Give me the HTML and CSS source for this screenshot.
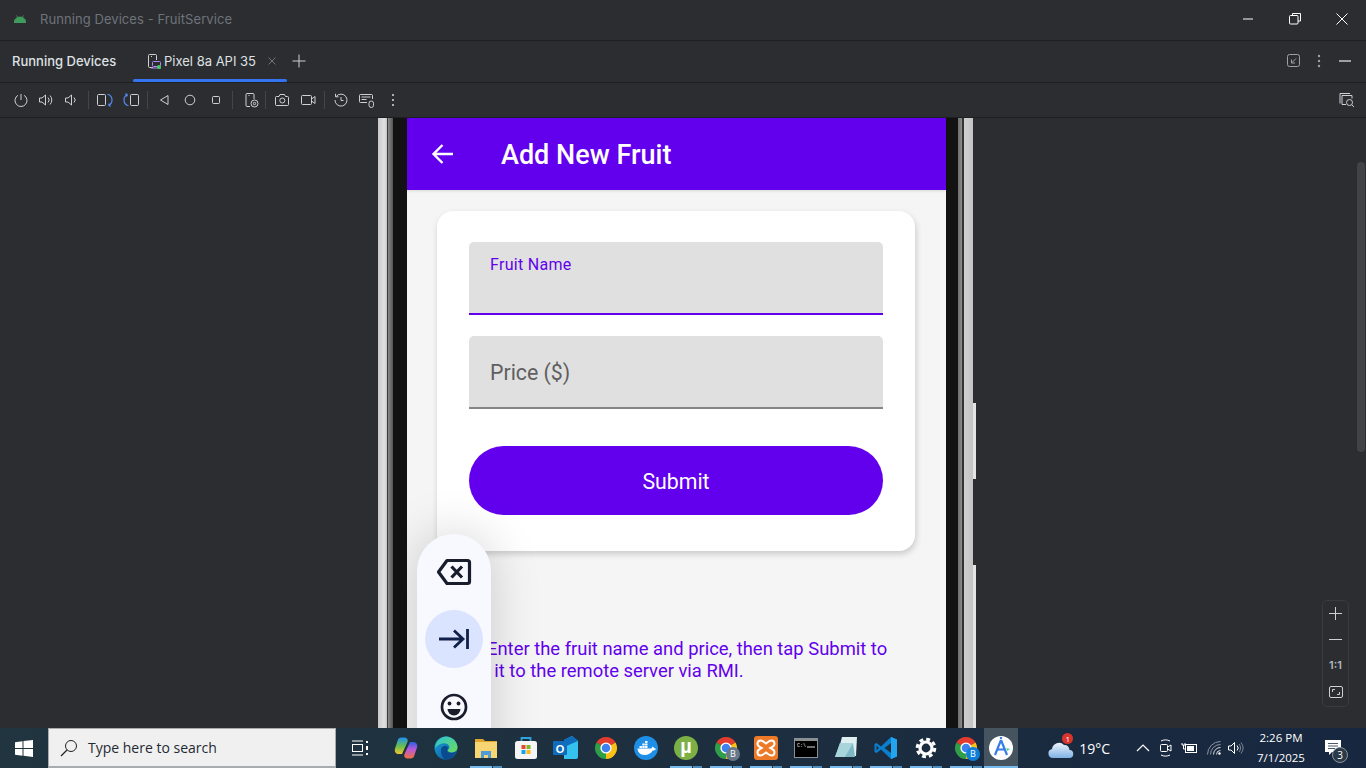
FILE: index.html
```html
<!DOCTYPE html>
<html lang="en">
<head>
<meta charset="utf-8">
<title>Running Devices - FruitService</title>
<link rel="stylesheet" href="styles.css">
</head>
<body>
<svg class="defs" width="0" height="0" aria-hidden="true">
  <defs>
    <symbol id="chrome" viewBox="0 0 24 24">
      <path d="M12 12 2.47 6.5A11 11 0 0 1 21.53 6.5Z" fill="#e33b2e"/>
      <path d="M12 12 21.53 6.5A11 11 0 0 1 12 23Z" fill="#fbc116"/>
      <path d="M12 12 12 23A11 11 0 0 1 2.47 6.5Z" fill="#2f9e48"/>
      <circle cx="12" cy="12" r="5.6" fill="#fff"/>
      <circle cx="12" cy="12" r="4.3" fill="#3f82ef"/>
    </symbol>
    <linearGradient id="edgeg" x1="0" y1="0" x2="1" y2="1">
      <stop offset="0" stop-color="#1aa3dc"/><stop offset="1" stop-color="#0a4f96"/>
    </linearGradient>
    <linearGradient id="edgeh" x1="0" y1="0" x2="1" y2="1">
      <stop offset="0" stop-color="#2cc3d5"/><stop offset="1" stop-color="#6fdc5a"/>
    </linearGradient>
    <linearGradient id="copa" x1="0" y1="0" x2="0" y2="1">
      <stop offset="0" stop-color="#1f8ff0"/><stop offset=".55" stop-color="#6cc04a"/><stop offset="1" stop-color="#f4c430"/>
    </linearGradient>
    <linearGradient id="copb" x1="0" y1="0" x2="0" y2="1">
      <stop offset="0" stop-color="#2a5fe0"/><stop offset=".45" stop-color="#b85ad8"/><stop offset="1" stop-color="#f2703c"/>
    </linearGradient>
    <linearGradient id="cloud" x1="0" y1="0" x2="0" y2="1">
      <stop offset="0" stop-color="#eef4fb"/><stop offset="1" stop-color="#7fb2e6"/>
    </linearGradient>
  </defs>
</svg>
<div class="app">
  <header class="titlebar">
    <svg class="android" width="12" height="8" viewBox="0 0 12 8"><path d="M0 8C0 4.500 2.500 2 6 2s6 2.500 6 6Z M2.500 0.500 4 3 M9.500 0.500 8 3" fill="#3f9c5c" stroke="#3f9c5c" stroke-width=".8"/></svg>
    <span class="title-text">Running Devices - FruitService</span>
    <div class="spacer"></div>
    <div class="win-ctrls">
      <svg width="12" height="12" viewBox="0 0 12 12"><path d="M1 6h10" stroke="#fff"/></svg>
      <svg width="12" height="12" viewBox="0 0 12 12" fill="none" stroke="#fff"><path d="M3.500 2.500V.5h8v7.500H9"/><rect x=".5" y="2.500" width="8.500" height="8.500" rx="1"/></svg>
      <svg width="12" height="12" viewBox="0 0 12 12"><path d="M.5.5l11 11M11.500.5l-11 11" stroke="#fff"/></svg>
    </div>
  </header>
  <nav class="tabsbar">
    <span class="tabs-label">Running Devices</span>
    <div class="tab">
      <svg width="16" height="16" viewBox="0 0 16 16" fill="none" stroke="#ced0d6"><path d="M7 14.500H3.500a1 1 0 0 1-1-1V2.500a1 1 0 0 1 1-1h6a1 1 0 0 1 1 1V7"/><path d="M5 3.500h1"/><rect x="6.500" y="8.500" width="8" height="5" rx="1" stroke="#b189f5"/><path d="M5 15h10" stroke="#b189f5"/><circle cx="13" cy="14" r="2" fill="#3fd15f" stroke="none"/></svg>
      <span>Pixel 8a API 35</span>
      <svg class="tab-x" width="8" height="8" viewBox="0 0 8 8"><path d="M.5.5l7 7M7.500.5l-7 7" stroke="#6f737a"/></svg>
    </div>
    <svg class="tab-plus" width="14" height="14" viewBox="0 0 14 14"><path d="M7 .5v13M.5 7h13" stroke="#ced0d6"/></svg>
    <div class="spacer"></div>
    <div class="tabs-right">
      <svg width="14" height="14" viewBox="0 0 14 14" fill="none" stroke="#9da0a8"><rect x=".5" y=".5" width="12" height="12" rx="2"/><path d="M9 4.500 4.500 9M4.500 5.500V9H8"/></svg>
      <svg width="4" height="14" viewBox="0 0 4 14" fill="#9da0a8"><circle cx="2" cy="2" r="1.200"/><circle cx="2" cy="7" r="1.200"/><circle cx="2" cy="12" r="1.200"/></svg>
      <svg width="14" height="14" viewBox="0 0 14 14"><path d="M1 7h12" stroke="#9da0a8" stroke-width="2"/></svg>
    </div>
  </nav>
  <div class="toolbar">
    <span class="tool w25"><svg viewBox="0 0 16 16"><path d="M8 2v6"/><path d="M5 3.300a6 6 0 1 0 6 0"/></svg></span>
    <span class="tool w25"><svg viewBox="0 0 16 16"><path d="M1.500 6v4h2.500l3.500 3V3L4 6Z"/><path d="M10 5.500a3.500 3.500 0 0 1 0 5M12 3.500a6.500 6.500 0 0 1 0 9"/></svg></span>
    <span class="tool w25"><svg viewBox="0 0 16 16"><path d="M2.500 6v4H5l3.500 3V3L5 6Z"/><path d="M11 5.500a3.500 3.500 0 0 1 0 5"/></svg></span>
    <i class="sep s1"></i>
    <span class="tool"><svg viewBox="0 0 16 16"><rect x=".5" y="2.500" width="8" height="11" rx="1"/><path class="blue" d="M10.500 2.500h1c2.200 1 3.500 3 3.500 5.500s-1.300 4.500-3.500 5.500M11.500 13.500l2.200.6M11.500 13.500l1-2"/></svg></span>
    <span class="tool"><svg viewBox="0 0 16 16"><rect x="7.500" y="2.500" width="8" height="11" rx="1"/><path class="blue" d="M5.500 13.500h-1C2.300 12.500 1 10.500 1 8s1.300-4.500 3.500-5.500M4.500 2.500l-2.200-.6M4.500 2.500l-1 2"/></svg></span>
    <i class="sep s2"></i>
    <span class="tool"><svg viewBox="0 0 16 16"><path d="M12 3.500v9L4.500 8Z"/></svg></span>
    <span class="tool"><svg viewBox="0 0 16 16"><circle cx="8" cy="8" r="4.800"/></svg></span>
    <span class="tool"><svg viewBox="0 0 16 16"><rect x="4.500" y="4.500" width="7" height="7" rx="1"/></svg></span>
    <i class="sep s3"></i>
    <span class="tool w24"><svg viewBox="0 0 16 16"><path d="M7 14.500H4a1 1 0 0 1-1-1v-11a1 1 0 0 1 1-1h6a1 1 0 0 1 1 1V7"/><path d="M5.500 3.500h1"/><circle cx="11.500" cy="11.500" r="3.500"/><circle cx="11.500" cy="11.500" r="1.200"/></svg></span>
    <i class="sep s4"></i>
    <span class="tool"><svg viewBox="0 0 16 16"><path d="M1.500 5.500a1 1 0 0 1 1-1H5l1-2h4.500l1 2h2a1 1 0 0 1 1 1v7a1 1 0 0 1-1 1h-11a1 1 0 0 1-1-1Z"/><circle cx="8.300" cy="8.500" r="2.500"/></svg></span>
    <span class="tool"><svg viewBox="0 0 16 16"><rect x="1.500" y="3.500" width="10" height="9" rx="1"/><path d="M11.500 7l3.500-2.500v7L11.500 9"/></svg></span>
    <i class="sep s5"></i>
    <span class="tool"><svg viewBox="0 0 16 16"><path d="M3.200 4.500A6 6 0 1 1 2 8"/><path d="M2.500 1.800v3h3"/><path d="M8 5v3.500h2.500"/></svg></span>
    <span class="tool"><svg viewBox="0 0 16 16"><path d="M8 10.500H1.500a1 1 0 0 1-1-1v-6a1 1 0 0 1 1-1h11a1 1 0 0 1 1 1V7"/><path d="M2.500 5h9M2.500 7.500h5"/><rect x="10" y="9" width="4.500" height="6.500" rx="2.200"/></svg></span>
    <span class="tool"><svg viewBox="0 0 16 16"><circle class="dot" cx="8" cy="3" r="1.100"/><circle class="dot" cx="8" cy="8" r="1.100"/><circle class="dot" cx="8" cy="13" r="1.100"/></svg></span>
    <div class="spacer"></div>
    <span class="tool last"><svg viewBox="0 0 16 16"><path d="M1 11.500V1.500h10"/><path d="M7 12.500H3V3.500h10v3"/><circle cx="10.500" cy="10.500" r="3"/><path d="M13 13l2 2"/></svg></span>
  </div>
  <main class="stage">
    <div class="phone">
      <span class="hw-btn hw-power"></span>
      <span class="hw-btn hw-vol"></span>
      <div class="screen">
        <div class="appbar">
          <svg class="back" width="24" height="24" viewBox="0 0 24 24"><path d="M22 12H2.500M11.500 3l-9 9 9 9" fill="none" stroke="#fff" stroke-width="2.400"/></svg>
          <h1 class="appbar-title">Add New Fruit</h1>
        </div>
        <div class="content">
          <form class="card">
            <div class="field field-focus"><span class="label-small">Fruit Name</span></div>
            <div class="field"><span class="label-large">Price ($)</span></div>
            <div class="submit">Submit</div>
          </form>
          <p class="helper"><span class="helper-first">Enter the fruit name and price, then tap Submit to</span><br>add it to the remote server via RMI.</p>
        </div>
        <div class="ime">
          <svg width="36" height="28" viewBox="0 0 36 28" fill="none" stroke="#191c2b" stroke-width="3.200" stroke-linejoin="round"><path d="M11 2.500h20.500a2 2 0 0 1 2 2v19a2 2 0 0 1-2 2H11L2.500 14Z"/><path d="M15.500 8.500l10.500 11M26 8.500 15.500 19.500"/></svg>
          <span class="ime-tab"><svg width="30" height="22" viewBox="0 0 30 22" fill="none" stroke="#10204a" stroke-width="2.800"><path d="M0 11h24M15 2.500l9 8.500-9 8.500M28.500 1v20"/></svg></span>
          <svg width="28" height="28" viewBox="0 0 28 28" fill="none" stroke="#191c2b" stroke-width="2.700"><circle cx="14" cy="14" r="12"/><circle cx="9.500" cy="10.500" r="1.900" fill="#191c2b" stroke="none"/><circle cx="18.500" cy="10.500" r="1.900" fill="#191c2b" stroke="none"/><path d="M7.500 16h13a6.500 6.500 0 0 1-13 0Z" fill="#191c2b" stroke="none"/></svg>
        </div>
      </div>
    </div>
    <span class="scroll-thumb"></span>
    <div class="zoom-box">
      <svg width="13" height="13" viewBox="0 0 13 13"><path d="M6.500 0v13M0 6.500h13" stroke="#ced0d6"/></svg>
      <svg width="13" height="13" viewBox="0 0 13 13"><path d="M0 6.500h13" stroke="#ced0d6"/></svg>
      <span class="one">1:1</span>
      <svg width="14" height="14" viewBox="0 0 14 14" fill="none" stroke="#ced0d6"><rect x=".5" y="1.500" width="13" height="11" rx="1.500"/><path d="M3.500 7V4.500H6M10.500 7v2.500H8"/></svg>
    </div>
  </main>
  <footer class="taskbar">
    <span class="start"><svg width="18" height="17" viewBox="0 0 18 17" fill="#fff"><path d="M0 2.300 7.500 1.200V8H0ZM8.500 1 18 0v8H8.500ZM0 9h7.500v6.800L0 14.700ZM8.500 9H18v8l-9.500-1.200Z"/></svg></span>
    <div class="search">
      <svg width="18" height="18" viewBox="0 0 18 18" fill="none" stroke="#222"><circle cx="11" cy="7" r="5.500"/><path d="M7 11l-6 6" stroke-width="1.300"/></svg>
      <span>Type here to search</span>
    </div>
    <span class="taskview"><svg width="18" height="16" viewBox="0 0 18 16" fill="none" stroke="#fff"><path d="M1 1h11M1 15h11"/><rect x="1.500" y="4.500" width="10" height="7"/><path d="M16 1v2M16 6v4M16 13v2" stroke-width="2"/></svg></span>
    <span class="app-i"><svg width="24" height="24" viewBox="0 0 24 24"><path d="M13.500 6c1-3-1-4.500-3.500-4.500H7.500C5 1.500 4 3 3.500 5L1 12.500C0 16 2 18 5 18h3Z" fill="url(#copa)"/><path d="M10.500 18c-1 3 1 4.500 3.500 4.500h2.500c2.500 0 3.500-1.500 4-3.500l2.500-7.500C24 8 22 6 19 6h-3Z" fill="url(#copb)"/></svg></span>
    <span class="app-i"><svg width="24" height="24" viewBox="0 0 24 24"><circle cx="12" cy="12" r="11.500" fill="url(#edgeg)"/><path d="M1 12C2 4 8 .5 12 .5c6 0 11.500 5 11.500 11 0 3-3 5-6 5-2 0-4-1-4-2.500 2-1 2.500-3 1-5-2-2.500-8-3-13.500 3Z" fill="url(#edgeh)"/><path d="M7 14c0-3 3-5 6-3.500 1.500 1 1 3 0 3.500 0 3 5 4 9 1.500-2 5-6 8-10 8-4-1-5-6-5-9.500Z" fill="#0b4a8e"/></svg></span>
    <span class="app-i run"><svg width="24" height="22" viewBox="0 0 24 22"><path d="M1 2h8l2 2h12v3H1Z" fill="#dfa52c"/><rect x="1" y="5" width="22" height="16" fill="#f7d573"/><path d="M7 21v-7h10v7h-3v-3h-4v3Z" fill="#4e9bd8"/></svg></span>
    <span class="app-i"><svg width="24" height="24" viewBox="0 0 24 24"><path d="M7.500 6V2h9v4" fill="none" stroke="#2ea3e0" stroke-width="1.800"/><rect x="1" y="5" width="22" height="18" rx="2.500" fill="#f5f5f5"/><rect x="7.500" y="9" width="4" height="4" fill="#e8472f"/><rect x="12.500" y="9" width="4" height="4" fill="#7db928"/><rect x="7.500" y="14" width="4" height="4" fill="#12a4ea"/><rect x="12.500" y="14" width="4" height="4" fill="#fbb812"/></svg></span>
    <span class="app-i"><svg width="26" height="24" viewBox="0 0 26 24"><path d="M11 4 19 0l6 5v16a2 2 0 0 1-2 2H11Z" fill="#36c2ee"/><path d="M11 4l8-4 6 5-14 6Z" fill="#0f6cbd"/><rect x="0" y="5" width="14" height="14" rx="1" fill="#0f6cbd"/><text x="7" y="16.500" class="outlook-o">O</text></svg></span>
    <span class="app-i"><svg width="24" height="24"><use href="#chrome"/></svg></span>
    <span class="app-i"><svg width="24" height="24" viewBox="0 0 24 24"><circle cx="12" cy="12" r="12" fill="#1d8fe6"/><path d="M3.500 12.500h14c.3-1 1-1.500 1.300-2 .7.500 1.200 1 1.300 1.800.8 0 1.500.2 2 .5-1 1.500-2.300 1.800-3.400 1.800-1.500 3-4.700 4.400-8 4.400-5 0-7-3-7.200-6.500Z" fill="#fff"/><path d="M5.500 10h2.400v2H5.500ZM8.300 10h2.400v2H8.300ZM11.100 10h2.400v2h-2.400ZM8.300 7.500h2.400v2H8.300ZM11.100 7.500h2.400v2h-2.400ZM11.100 5h2.400v2h-2.400Z" fill="#fff"/></svg></span>
    <span class="app-i run"><svg width="24" height="24" viewBox="0 0 24 24"><circle cx="12" cy="12" r="12" fill="#7cb044"/><text x="12" y="17" class="mu">µ</text></svg></span>
    <span class="app-i run"><svg width="24" height="24"><use href="#chrome"/></svg><span class="badge-b grey">B</span></span>
    <span class="app-i run"><svg width="24" height="24" viewBox="0 0 24 24"><rect width="24" height="24" rx="3" fill="#ee7a28"/><path d="M6.500 4.500c2 0 3.500 1.500 5.500 3 2-1.500 3.500-3 5.500-3 2 0 3 1.500 3 3.500 0 2-2 3-4 4 2 1 4 2 4 4 0 2-1 3.500-3 3.500-2 0-3.500-1.500-5.500-3-2 1.500-3.500 3-5.500 3-2 0-3-1.500-3-3.500 0-2 2-3 4-4-2-1-4-2-4-4 0-2 1-3.500 3-3.500Z" fill="none" stroke="#fff" stroke-width="2"/></svg></span>
    <span class="app-i run"><svg width="24" height="20" viewBox="0 0 24 20"><rect x=".5" y=".5" width="23" height="19" fill="#000" stroke="#8a8f94"/><rect x="1" y="1" width="22" height="2" fill="#8a8f94"/><text x="3" y="9" class="cmd">C:\</text><path d="M13 9h8" stroke="#ddd"/></svg></span>
    <span class="app-i run"><svg width="24" height="24" viewBox="0 0 24 24"><path d="M8 1h15l-1 19H3Z" fill="#dfeef0"/><path d="M6 7h13l2 14H1Z" fill="#7fb7c4"/><path d="M6 7h13l-8 14H1Z" fill="#a8d4dc"/></svg></span>
    <span class="app-i run"><svg width="24" height="24" viewBox="0 0 24 24"><path d="M17 1 7 10.500 2.500 7 .5 8v8l2 1L7 13.500 17 23l6-2.500v-17Z" fill="#0a7fd0"/><path d="M17 1v22l6-2.500v-17Z" fill="#22a5ee"/><path d="M17 7 10.500 12l6.500 5Z" fill="#1c2f3f"/><path d="M2.500 9.500 5 12l-2.500 2.500Z" fill="#1c2f3f"/></svg></span>
    <span class="app-i run"><svg width="22" height="22" viewBox="0 0 22 22" fill="none" stroke="#fff"><circle cx="11" cy="11" r="6" stroke-width="3.200"/><circle cx="11" cy="11" r="8.800" stroke-width="3" stroke-dasharray="3.900 3"/></svg></span>
    <span class="app-i run"><svg width="24" height="24"><use href="#chrome"/></svg><span class="badge-b">B</span></span>
    <span class="app-i active"><svg width="24" height="24" viewBox="0 0 24 24"><circle cx="12" cy="12" r="12" fill="#fff"/><path d="M12 4 6 19M12 4l6 15M8 13.500h8M12 3V1" fill="none" stroke="#3b7de8" stroke-width="2.200"/><path d="M17.500 12l3.500 1-3 2Z" fill="#3ddc84"/></svg></span>
    <div class="spacer"></div>
    <div class="tray">
      <span class="weather"><svg width="26" height="22" viewBox="0 0 26 22"><path d="M5 21a4.500 4.500 0 0 1-1-8.900A7 7 0 0 1 16 8a5 5 0 0 1 5.500 5A4 4 0 0 1 21 21Z" fill="url(#cloud)"/></svg><span class="red-dot">1</span></span>
      <span class="temp">19°C</span>
      <svg class="t-chev" width="14" height="8" viewBox="0 0 14 8"><path d="M1 7l6-6 6 6" fill="none" stroke="#fff" stroke-width="1.200"/></svg>
      <svg class="t-cam" width="13" height="18" viewBox="0 0 13 18" fill="none" stroke="#fff"><path d="M2 2c3-1.500 6-1.500 9 0M2 16c3 1.500 6 1.500 9 0"/><rect x="1.500" y="5.500" width="7" height="7" rx="1"/><path d="M8.500 8l3.500-2v6l-3.500-2"/></svg>
      <svg class="t-bat" width="17" height="12" viewBox="0 0 17 12"><path d="M1 1v2h3V1M2.500 3v4h2" fill="none" stroke="#fff"/><rect x="4.500" y="2.500" width="11" height="8" fill="none" stroke="#fff"/><rect x="6" y="4" width="7" height="5" fill="#fff"/></svg>
      <svg class="t-wifi" width="14" height="14" viewBox="0 0 14 14" fill="none" stroke="#d5d8dc"><path d="M.5 13.500A13 13 0 0 1 13.500.5M3.500 13.500a10 10 0 0 1 10-10" stroke="#8f99a6"/><path d="M6.500 13.500a7 7 0 0 1 7-7M9.500 13.500a4 4 0 0 1 4-4"/><circle cx="12.500" cy="12.500" r="1.200" fill="#fff" stroke="none"/></svg>
      <svg class="t-spk" width="16" height="14" viewBox="0 0 16 14" fill="none" stroke="#fff"><path d="M.5 5v4h2.500L6.500 12.500v-11L3 5Z"/><path d="M9 4.500a3.500 3.500 0 0 1 0 5"/><path d="M11 3a6 6 0 0 1 0 8M13 1.500a9 9 0 0 1 0 11" stroke="#7d8792"/></svg>
      <div class="clock"><span>2:26 PM</span><span>7/1/2025</span></div>
      <span class="notif"><svg width="16" height="16" viewBox="0 0 16 16"><path d="M0 0h16v12H7l-3 3v-3H0Z" fill="#fff"/><path d="M3 3.500h10M3 6h10M3 8.500h7" stroke="#4a5a6a"/></svg><span class="notif-n">3</span></span>
    </div>
  </footer>
</div>
</body>
</html>
```
FILE: styles.css
```css
* { box-sizing: border-box; }
html, body { margin: 0; height: 100%; overflow: hidden; background: #2b2d30; }
.defs { display: block; width: 0; height: 0; }
.app { width: 1366px; height: 768px; display: flex; flex-direction: column; font-family: Inter, "Liberation Sans", sans-serif; color: #dfe1e5; font-size: 13px; }
.spacer { flex: 1; }

.titlebar { height: 41px; display: flex; align-items: center; padding: 0 0 2px 14px; border-bottom: 1px solid #1e1f22; flex: none; }
.android { margin-right: 14px; }
.title-text { color: #6f737a; font-size: 13px; letter-spacing: .07px; }
.win-ctrls { display: flex; align-items: center; gap: 35px; padding-right: 18px; }

.tabsbar { height: 42px; display: flex; align-items: center; padding-left: 12px; border-bottom: 1px solid #1e1f22; flex: none; }
.tabs-label { font-weight: 500; width: 121px; color: #dfe1e5; padding-bottom: 2px; }
.tab { position: relative; height: 41px; width: 154px; display: flex; align-items: center; padding: 0 0 2px 13px; gap: 2px; color: #dfe1e5; }
.tab::after { content: ""; position: absolute; left: 0; right: 0; bottom: 0; height: 3px; background: #3574f0; border-radius: 2px; }
.tab-x { margin-left: 10px; }
.tab-plus { margin: 0 0 2px 5px; }
.tabs-right { display: flex; align-items: center; padding: 0 14px 2px 0; }
.tabs-right svg:nth-child(1) { margin-right: 16px; }
.tabs-right svg:nth-child(2) { margin-right: 17px; }

.toolbar { height: 35px; display: flex; align-items: center; padding-left: 8px; border-bottom: 1px solid #1e1f22; flex: none; }
.tool { width: 26px; height: 18px; display: flex; align-items: center; justify-content: center; flex: none; }
.tool.w25 { width: 25px; }
.tool.w24 { width: 24px; }
.tool.last { margin-right: 6px; }
.tool svg { width: 16px; height: 16px; fill: none; stroke: #ced0d6; stroke-width: 1; }
.tool svg .blue { stroke: #548af7; stroke-width: 1.200; }
.tool svg .dot { fill: #ced0d6; stroke: none; }
.sep { width: 1px; height: 18px; background: #43454a; flex: none; display: block; }
.s1 { margin: 0 3px 0 5px; }
.s2 { margin: 0 3px; }
.s3 { margin: 0 6px 0 3px; }
.s4 { margin: 0 3px 0 2px; }
.s5 { margin: 0 3px; }

.stage { flex: 1; min-height: 0; position: relative; overflow: hidden; padding-left: 378px; }
.phone { position: relative; width: 595px; height: 100%; padding: 0 27px 0 29px;
  background: linear-gradient(to right,
    #c9c9c9 0, #e2e2e2 6px, #c9c9c9 9px, #3a3a3a 9px, #3a3a3a 10px, #8a8a8a 10px, #555 15px,
    #121212 15px, #121212 580px,
    #6e6e6e 580px, #8c8c8c 584px, #333 584px, #333 586px, #cfcfcf 586px, #c4c4c4 595px); }
.hw-btn { position: absolute; left: 595px; width: 3px; background: #e4e4e4; }
.hw-power { top: 285px; height: 76px; }
.hw-vol { top: 447px; height: 163px; }
.screen { position: relative; height: 100%; background: #f5f5f5; overflow: hidden; font-family: Roboto, "Liberation Sans", sans-serif; }
.appbar { height: 72px; background: #6200ee; display: flex; align-items: center; padding-left: 24px; box-shadow: 0 1px 3px rgba(0,0,0,.12); position: relative; }
.back { flex: none; }
.appbar-title { margin: 2px 0 0 46px; font-size: 27px; font-weight: 500; color: #fff; }
.content { padding: 21px 31px 0 30px; }
.card { height: 340px; background: #fff; border-radius: 16px; padding: 31px 32px 0; box-shadow: 1px 3px 6px rgba(0,0,0,.18); display: flex; flex-direction: column; }
.field { height: 73px; background: #e0e0e0; border-radius: 5px 5px 0 0; border-bottom: 2px solid #858585; padding: 2px 0 0 21px; display: flex; align-items: center; margin-bottom: 21px; }
.field-focus { border-bottom: 2px solid #6200ee; align-items: flex-start; padding-top: 13px; }
.label-small { font-size: 16px; letter-spacing: .3px; color: #6200ee; }
.label-large { font-size: 21.300px; color: #5f5f5f; }
.submit { margin-top: 16px; height: 69px; border-radius: 35px; background: #6200ee; color: #fff; font-size: 21.300px; font-weight: 400; padding-top: 2px; display: flex; align-items: center; justify-content: center; }
.helper { margin: 87px 0 0 22px; font-size: 18.400px; line-height: 22px; color: #6200ee; white-space: nowrap; }
.helper-first { margin-left: 28px; }
.ime { position: absolute; left: 10px; top: 416px; width: 74px; height: 300px; background: #f8f8ff; border-radius: 37px; box-shadow: 0 0 50px rgba(0,0,0,.18); display: flex; flex-direction: column; align-items: center; padding-top: 24px; }
.ime-tab { width: 58px; height: 58px; border-radius: 50%; background: #dae4ff; display: flex; align-items: center; justify-content: center; margin: 24px 0 25px; }

.scroll-thumb { position: absolute; left: 1357px; top: 44px; width: 8px; height: 290px; background: #414347; border-radius: 4px; }
.zoom-box { position: absolute; left: 1322px; top: 482px; width: 27px; height: 107px; border: 1px solid #393b40; border-radius: 5px; display: flex; flex-direction: column; align-items: center; gap: 13px; padding-top: 6px; color: #b4b8bf; }
.one { font-size: 11px; line-height: 13px; font-weight: 600; }

.taskbar { height: 40px; flex: none; display: flex; align-items: center; background: linear-gradient(to right, #20353f, #1d2f3f 50%, #172740); font-family: "Open Sans", "Liberation Sans", sans-serif; color: #fff; }
.start { width: 48px; display: flex; justify-content: center; }
.search { width: 288px; height: 40px; background: #f0f0f0; border: 1px solid #a8acae; border-bottom-width: 2px; display: flex; align-items: center; padding-left: 11px; color: #1f2a33; font-size: 14px; font-family: "Open Sans", "Liberation Sans", sans-serif; gap: 10px; }
.taskview { width: 50px; padding-right: 2px; display: flex; justify-content: center; }
.app-i { position: relative; width: 40px; height: 40px; display: flex; align-items: center; justify-content: center; flex: none; }
.app-i.run::after { content: ""; position: absolute; left: 4px; bottom: 0; width: 32px; height: 2px; background: linear-gradient(to right, #76b9ed 0 22px, #1d2f3f 22px 23px, #4f8fbf 23px); }
.app-i.active { width: 34px; margin-left: -2px; background: #46545f; }
.app-i.active::after { content: ""; position: absolute; left: 0; right: 0; bottom: 0; height: 2px; background: #76b9ed; }
.badge-b { position: absolute; left: 20px; top: 19px; width: 14px; height: 14px; border-radius: 50%; background: #0f7fd6; color: #fff; font-size: 9px; line-height: 14px; text-align: center; }
.badge-b.grey { background: #66788a; }
.outlook-o { font: 700 11px "Liberation Sans", sans-serif; fill: #fff; text-anchor: middle; }
.mu { font: 700 20px "Liberation Sans", sans-serif; fill: #fff; text-anchor: middle; }
.cmd { font: 5px "Liberation Mono", monospace; fill: #eee; }
.tray { display: flex; align-items: center; height: 40px; }
.weather { position: relative; display: flex; margin-right: 5px; }
.red-dot { position: absolute; left: 14px; top: -4px; width: 11px; height: 11px; border-radius: 50%; background: #d8342c; color: #fff; font-size: 8px; line-height: 11px; text-align: center; }
.temp { font-size: 14px; margin-right: 26px; }
.t-chev { margin-right: 9px; }
.t-cam { margin-right: 9px; }
.t-bat { margin-right: 9px; }
.t-wifi { margin-right: 7px; }
.t-spk { margin-right: 5px; }
.clock { width: 64px; display: flex; flex-direction: column; align-items: center; font-size: 11.500px; line-height: 20px; margin-right: 12px; }
.notif { position: relative; width: 16px; display: flex; margin-right: 25px; }
.notif-n { position: absolute; left: 7px; top: 7px; width: 16px; height: 16px; border-radius: 50%; background: #2c3a46; border: 1px solid #8b949c; color: #fff; font-size: 10px; line-height: 14px; text-align: center; }
```
